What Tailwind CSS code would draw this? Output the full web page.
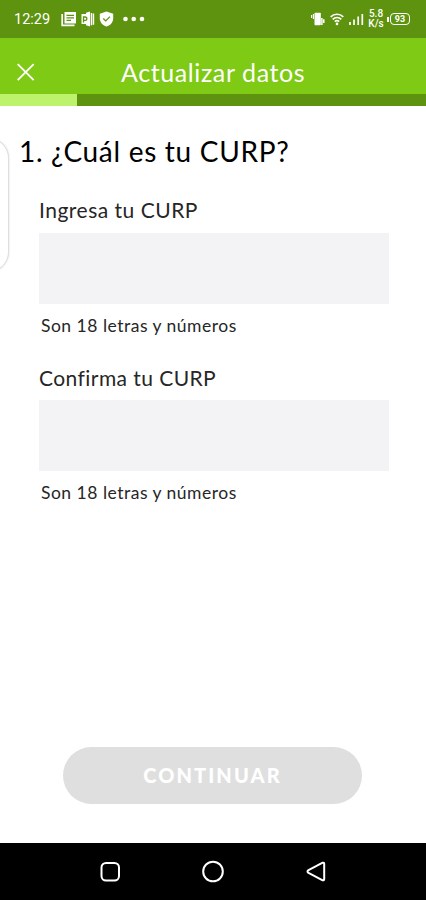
<!DOCTYPE html>
<html lang="es">
<head>
<meta charset="utf-8">
<meta name="viewport" content="width=device-width, initial-scale=1">
<title>Actualizar datos</title>
<script src="https://cdn.jsdelivr.net/npm/@tailwindcss/browser@4"></script>
</head>
<body class="bg-white">
<div class="relative flex h-[900px] w-[426px] flex-col overflow-hidden bg-white font-['Lato',sans-serif]">
  <!-- Status bar -->
  <div class="flex h-[38px] shrink-0 items-center bg-[#5e930f] pl-[14px] font-['Roboto',sans-serif] text-white">
    <span class="w-[47px] whitespace-nowrap pt-[2px] text-[14.5px] leading-none">12:29</span>
    <svg class="h-[38px] w-[90px] shrink-0" viewBox="61 0 90 38" fill="none">
      <path d="M64.5 12H76v11.500H64.500z" fill="#fff"/>
      <path d="M62.200 14v11.400H74.500" stroke="#fff" stroke-width="1.700"/>
      <path d="M66.500 15.300h7.500M66.500 17.800h7.500M66.500 20.300h4.500" stroke="#5e930f" stroke-width="1.200"/>
      <path d="M81.500 14H86v-1.200l4-1.300v15l-4-1.300V24h-4.500z" fill="#fff"/>
      <path d="M83.500 22.500v-5.500h1.700a1.700 1.700 0 0 1 0 3.400h-1.700" stroke="#5e930f" stroke-width="1.300"/>
      <path d="M90.700 13h1.500v12.300h-1.500zM92.800 13.500h1.400v11.200h-1.400z" fill="#fff"/>
      <path d="M106.500 11.500l6.700 2.200v4.500c0 3.900-2.700 7-6.700 8.400-4-1.400-6.700-4.500-6.700-8.400v-4.500z" fill="#fff"/>
      <path d="M103.300 18.500l2.400 2.400 4.300-4.300" stroke="#5e930f" stroke-width="1.300"/>
      <g fill="#fff"><circle cx="125.500" cy="19" r="2.300"/><circle cx="133.700" cy="19" r="2.300"/><circle cx="142" cy="19" r="2.300"/></g>
    </svg>
    <svg class="ml-[159px] h-[38px] w-[55px] shrink-0" viewBox="310 0 55 38" fill="none" stroke="#fff">
      <rect x="314.500" y="12.700" width="6.300" height="12.600" rx=".8" fill="#fff" stroke="none"/>
      <path d="M311.600 15v3M313.400 14v5" stroke-width="1.100"/>
      <path d="M321.900 18v7M323.800 19.300v3.700" stroke-width="1.500"/>
      <path d="M330.700 16.800a9 9 0 0 1 12.600 0M332.700 19.300a6 6 0 0 1 8.600 0M334.800 21.700a3.200 3.200 0 0 1 4.400 0" stroke-width="1.700"/>
      <circle cx="337" cy="23.900" r="1.300" fill="#fff" stroke="none"/>
      <path d="M350 22v3M354 19.500V25M358.200 16.500V25M362.300 14v11" stroke-width="1.700"/>
    </svg>
    <div class="w-[22px] text-center text-[10px] font-medium leading-[10px]">5.8<br>K/s</div>
    <div class="h-[5px] w-[2px] bg-white"></div>
    <div class="ml-[1px] flex h-[12px] w-[20px] items-center justify-center rounded-[4px] border border-white text-[9px] font-bold leading-none">93</div>
  </div>

  <!-- App bar -->
  <header class="flex h-[56px] shrink-0 items-center bg-[#7eca14] pt-[11px] text-white">
    <svg class="ml-[17px] h-[18px] w-[18px]" viewBox="0 0 18 18" fill="none" stroke="#fff" stroke-width="1.900"><path d="M.7 1.200l16 16M16.700 1.200l-16 16"/></svg>
    <h1 class="ml-[86px] whitespace-nowrap text-[25px] leading-[30px] tracking-[0.600px]">Actualizar datos</h1>
  </header>
  <div class="h-[12px] shrink-0 bg-[#5e930f]"><div class="h-full w-[77px] bg-[#bcf26c]"></div></div>

  <!-- Form -->
  <main class="flex flex-1 flex-col pl-[39px]">
    <h2 class="-ml-[20px] mt-[27px] whitespace-nowrap text-[28px] leading-[36px] tracking-[0.700px] text-black">1. ¿Cuál es tu CURP?</h2>
    <label for="curp" class="mt-[27px] h-[28px] whitespace-nowrap text-[21px] leading-[28px] tracking-[0.500px] text-[#262626]">Ingresa tu CURP</label>
    <input id="curp" class="mt-[9px] h-[71px] w-[350px] shrink-0 bg-[#f3f3f5]">
    <p class="ml-[2px] mt-[10px] h-[24px] whitespace-nowrap text-[17.500px] leading-[24px] tracking-[0.500px] text-[#262626]">Son 18 letras y números</p>
    <label for="curp2" class="mt-[26px] h-[28px] whitespace-nowrap text-[21px] leading-[28px] tracking-[0.430px] text-[#262626]">Confirma tu CURP</label>
    <input id="curp2" class="mt-[8px] h-[71px] w-[350px] shrink-0 bg-[#f3f3f5]">
    <p class="ml-[2px] mt-[10px] h-[24px] whitespace-nowrap text-[17.500px] leading-[24px] tracking-[0.500px] text-[#262626]">Son 18 letras y números</p>
    <button class="mb-[39px] ml-[24px] mt-auto h-[57px] w-[299px] rounded-full bg-[#dfdfdf] pb-[2px] text-[20px] font-black tracking-[2.100px] text-white">CONTINUAR</button>
  </main>

  <!-- System navigation -->
  <nav class="h-[57px] shrink-0 bg-black">
    <svg class="h-[57px] w-[426px]" viewBox="0 843 426 57" fill="none" stroke="#fff" stroke-width="2">
      <rect x="101.500" y="863" width="17.500" height="17.500" rx="4.500"/>
      <circle cx="213" cy="871.500" r="9.800"/>
      <path d="M322.700 862.700l-14.200 7.500q-2 1.300 0 2.600l14.200 7.500q1.500.3 1.500-1.200v-15.200q0-1.500-1.500-1.200z" stroke-linejoin="round"/>
    </svg>
  </nav>

  <!-- Edge panel handle overlapping the page -->
  <div class="absolute -left-[31px] top-[138px] h-[134px] w-[40px] rounded-[20px] border border-[#dedede] bg-white shadow-[0_0_2px_rgba(0,0,0,0.15)]"></div>
</div>
</body>
</html>
